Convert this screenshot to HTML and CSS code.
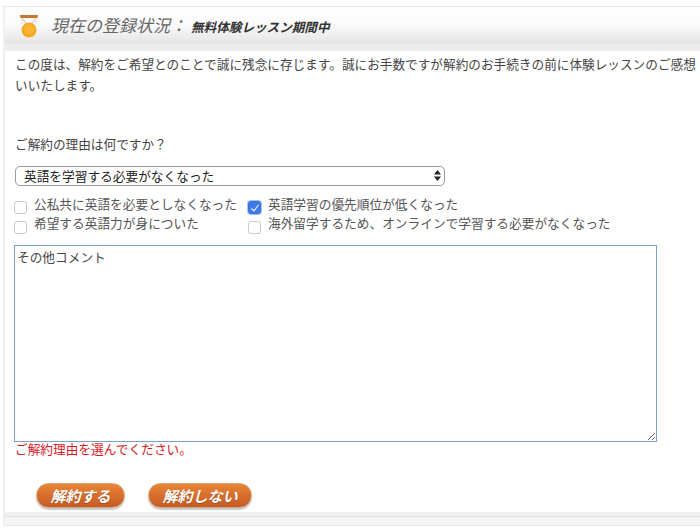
FILE: index.html
```html
<!DOCTYPE html>
<html lang="ja">
<head>
<meta charset="utf-8">
<title>現在の登録状況</title>
<link rel="stylesheet" href="styles.css">
</head>
<body>
<div class="panel">
  <header class="head">
    <svg class="medal" width="22" height="28" viewBox="0 0 22 28" aria-hidden="true">
      <path d="M2 1h18l-.5 3h-17z" fill="#c9772e"/>
      <path d="M4 4l4.500 6M18 4l-4.500 6" stroke="#cfcabf" stroke-width="1.200" fill="none"/>
      <path d="M4 4v6M18 4v6" stroke="#e3dfd6" stroke-width="1" fill="none"/>
      <circle cx="11" cy="16" r="7.500" fill="#f2a920"/>
      <circle cx="11" cy="15.500" r="5" fill="#f7b432"/>
    </svg>
    <h1 class="title">現在の登録状況：</h1>
    <span class="status">無料体験レッスン期間中</span>
  </header>
  <div class="strip"></div>
  <main class="body">
    <p class="intro">この度は、解約をご希望とのことで誠に残念に存じます。誠にお手数ですが解約のお手続きの前に体験レッスンのご感想<br>いいたします。</p>
    <p class="question">ご解約の理由は何ですか？</p>
    <div class="select-wrap">
      <select class="select"><option>英語を学習する必要がなくなった</option></select>
      <svg class="arrows" width="7" height="13" viewBox="0 0 7 13" aria-hidden="true">
        <path d="M3.500 1L7 5.500H0zM3.500 12L0 7.500h7z" fill="#222"/>
      </svg>
    </div>
    <div class="checks">
      <label class="check"><input type="checkbox"><span>公私共に英語を必要としなくなった</span></label>
      <label class="check"><input type="checkbox" checked><span>英語学習の優先順位が低くなった</span></label>
      <label class="check check-low"><input type="checkbox"><span>希望する英語力が身についた</span></label>
      <label class="check check-low"><input type="checkbox"><span>海外留学するため、オンラインで学習する必要がなくなった</span></label>
    </div>
    <textarea class="comment">その他コメント</textarea>
    <p class="error">ご解約理由を選んでください。</p>
    <div class="actions">
      <button class="btn btn-yes" type="button">解約する</button>
      <button class="btn btn-no" type="button">解約しない</button>
    </div>
  </main>
  <div class="foot"></div>
</div>
</body>
</html>
```
FILE: styles.css
```css
html, body {
  margin: 0;
  height: 532px;
  overflow: hidden;
  background: #fff;
}
body {
  font-family: "Noto Sans CJK JP", "Liberation Sans", sans-serif;
  color: #444;
  font-size: 12.7px;
}
.panel {
  margin-top: 6px;
  border-left: 2px solid #efefef;
  margin-left: 3px;
  width: 720px;
}
.head {
  height: 37px;
  display: flex;
  align-items: center;
  border-top: 1px solid #e8e8e8;
  background: linear-gradient(#fefefe 0%, #fbfbfb 45%, #e4e4e4 100%);
}
.medal {
  margin-left: 13px;
  flex: none;
  position: relative;
  top: 2.500px;
}
.title {
  margin: 0 0 2px 11px;
  font-size: 17px;
  font-weight: 400;
  font-style: italic;
  color: #666;
  line-height: 20px;
}
.status {
  margin-left: 4px;
  font-size: 12.600px;
  font-weight: 700;
  font-style: italic;
  color: #333;
  position: relative;
  top: 1px;
}
.strip {
  height: 7px;
  background: #ececec;
}
.body {
  padding-left: 10px;
  height: 461px;
  overflow: hidden;
}
.intro {
  margin: 0;
  padding-top: 2px;
  font-size: 12.650px;
  line-height: 21px;
  white-space: nowrap;
  color: #444;
}
.question {
  margin: 38px 0 0;
  line-height: 21px;
  font-size: 12.650px;
}
.select-wrap {
  margin-top: 12px;
  width: 430px;
  position: relative;
}
.select {
  appearance: none;
  display: block;
  width: 430px;
  height: 20px;
  box-sizing: border-box;
  border: 1px solid #9a9a9a;
  border-radius: 5px;
  background: #fff;
  padding: 0 0 0 8px;
  font: 12.700px/18px "Noto Sans CJK JP", sans-serif;
  color: #222;
}
.arrows {
  position: absolute;
  right: 4px;
  top: 3px;
}
.checks {
  display: grid;
  grid-template-columns: 234px 1fr;
  grid-auto-rows: 20px;
  margin-top: 9px;
}
.check {
  display: flex;
  align-items: center;
  line-height: 19px;
  white-space: nowrap;
  color: #555;
}
.check span {
  position: relative;
  top: -2px;
}
.check-low span {
  top: -3px;
}
.check input {
  appearance: none;
  flex: none;
  width: 13px;
  height: 13px;
  margin: 5px 7px 0 -1px;
  border: 1px solid #c9c9c9;
  border-radius: 3px;
  background: #fff;
  position: relative;
}
.check input:checked {
  background: #3f7ae8;
  border-color: #3a6fd6;
  box-shadow: 0 0 0 1px #a9c4f2;
}
.check input:checked::after {
  content: "";
  position: absolute;
  left: 3.500px;
  top: 1px;
  width: 3px;
  height: 7px;
  border: solid #fff;
  border-width: 0 1.300px 1.300px 0;
  transform: rotate(38deg);
}
.comment {
  display: block;
  margin: 10px 0 0 -1px;
  width: 643px;
  height: 197px;
  box-sizing: border-box;
  border: 1px solid #7e9fc6;
  border-radius: 0;
  padding: 2px;
  font: 12.700px/18px "Noto Sans CJK JP", sans-serif;
  color: #444;
  outline: 0;
}
.error {
  margin: -1px 0 0;
  color: #d9161b;
  font-size: 12.700px;
  line-height: 16px;
}
.actions {
  display: flex;
  gap: 23px;
  margin: 26px 0 0 21px;
}
.btn {
  height: 25px;
  padding: 0;
  border: 1px solid #d4a27e;
  border-radius: 13px;
  background: linear-gradient(#e98435, #c65a24);
  box-shadow: 0 2px 1px #c9c9c9;
  color: #fff;
  font: italic 700 15px/22px "Noto Sans CJK JP", sans-serif;
  text-shadow: 0 1px 1px #9c4a18;
}
.btn-yes { width: 89px; }
.btn-no { width: 104px; }
.foot {
  height: 13px;
  background: linear-gradient(#f2f0ee 0 4px, #e4e4e4 4px 5px, #f5f5f5 5px);
  border-bottom: 1px solid #e6e6e6;
}
```
